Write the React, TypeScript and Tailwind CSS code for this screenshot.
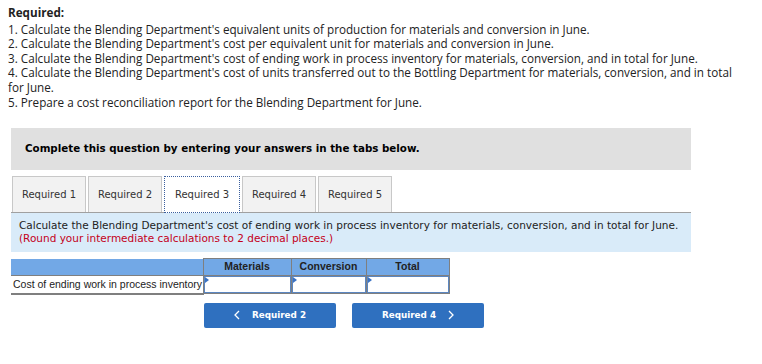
import React from 'react'

const tabs = ['Required 1', 'Required 2', 'Required 3', 'Required 4', 'Required 5']

const InputCell: React.FC = () => (
  <td className="p-0 border border-[#7f7f7f] bg-white h-[18px]">
    <div className="relative h-[17px] border border-[#5b86c0]">
      <span className="absolute left-0 top-0 w-0 h-0 border-t-[3px] border-b-[3px] border-l-[4px] border-t-transparent border-b-transparent border-l-[#3b73c4]" />
    </div>
  </td>
)

const Chevron: React.FC<{ dir: 'left' | 'right' }> = ({ dir }) => (
  <svg width="6" height="10" viewBox="0 0 6 10" fill="none" stroke="white" strokeWidth="1.3">
    {dir === 'left' ? <polyline points="5,1 1,5 5,9" /> : <polyline points="1,1 5,5 1,9" />}
  </svg>
)

const App: React.FC = () => {
  return (
    <div className="w-[762px] h-[364px] bg-white relative overflow-hidden">
      {/* Question text */}
      <div className="pl-2 pt-[5px] pr-3 text-[11.7px] leading-[14.6px] text-[#222] font-['Open_Sans',sans-serif]">
        <p className="font-bold mb-[2px]">Required:</p>
        <p>1. Calculate the Blending Department's equivalent units of production for materials and conversion in June.</p>
        <p>2. Calculate the Blending Department's cost per equivalent unit for materials and conversion in June.</p>
        <p>3. Calculate the Blending Department's cost of ending work in process inventory for materials, conversion, and in total for June.</p>
        <p>4. Calculate the Blending Department's cost of units transferred out to the Bottling Department for materials, conversion, and in total for June.</p>
        <p>5. Prepare a cost reconciliation report for the Blending Department for June.</p>
      </div>

      <div className="ml-[11px] w-[680px] mt-[19px] font-['DejaVu_Sans',Verdana,sans-serif]">
        {/* Instruction box */}
        <div className="h-[42px] bg-[#e0e0e0] flex items-center pl-[14px] text-[10.3px] font-bold text-black">
          Complete this question by entering your answers in the tabs below.
        </div>

        {/* Tabs */}
        <div className="mt-[6px] flex gap-[2px] pl-px border-b border-[#a0a0a0]">
          {tabs.map((t, i) =>
            i === 2 ? (
              <div key={t} className="w-[76px] h-[37px] -mb-px bg-white border border-dotted border-[#3a5f9e] flex items-center justify-center text-[10px] text-[#333]">
                {t}
              </div>
            ) : (
              <div key={t} className="w-[74px] h-[36px] bg-[#f2f2f2] border border-b-0 border-[#c8c8c8] flex items-center justify-center text-[10px] text-[#333]">
                {t}
              </div>
            )
          )}
        </div>

        {/* Prompt */}
        <div className="h-[39px] bg-[#d9ebf9] pl-2 pt-[6px] text-[10.5px] leading-[13px]">
          <p className="text-[#222]">Calculate the Blending Department's cost of ending work in process inventory for materials, conversion, and in total for June.</p>
          <p className="text-[#c4001a]">(Round your intermediate calculations to 2 decimal places.)</p>
        </div>

        {/* Answer table */}
        <table className="mt-[6px] w-[438px] table-fixed border-collapse font-['Liberation_Sans',Arial,sans-serif] text-[10.5px]">
          <thead>
            <tr className="bg-[#72a8e6] h-[17px] text-[#222]">
              <th className="w-[192px] border-b border-r border-[#7f7f7f]"></th>
              <th className="w-[88px] border border-[#7f7f7f] font-bold">Materials</th>
              <th className="w-[75px] border border-[#7f7f7f] font-bold">Conversion</th>
              <th className="w-[83px] border border-[#7f7f7f] font-bold">Total</th>
            </tr>
          </thead>
          <tbody>
            <tr>
              <td className="border-b-2 border-[#7f7f7f] pl-[2px] text-[#222] whitespace-nowrap overflow-hidden">Cost of ending work in process inventory</td>
              <InputCell />
              <InputCell />
              <InputCell />
            </tr>
          </tbody>
        </table>

        {/* Navigation */}
        <div className="mt-2 ml-[193px] flex gap-4">
          <button className="w-[132px] h-[25px] rounded-[2px] bg-[#2f70bf] text-white text-[8.8px] font-bold flex items-center justify-center gap-[12px]">
            <Chevron dir="left" />
            <span>Required 2</span>
          </button>
          <button className="w-[132px] h-[25px] rounded-[2px] bg-[#2f70bf] text-white text-[8.8px] font-bold flex items-center justify-center gap-[12px]">
            <span>Required 4</span>
            <Chevron dir="right" />
          </button>
        </div>
      </div>
    </div>
  )
}

export default App
